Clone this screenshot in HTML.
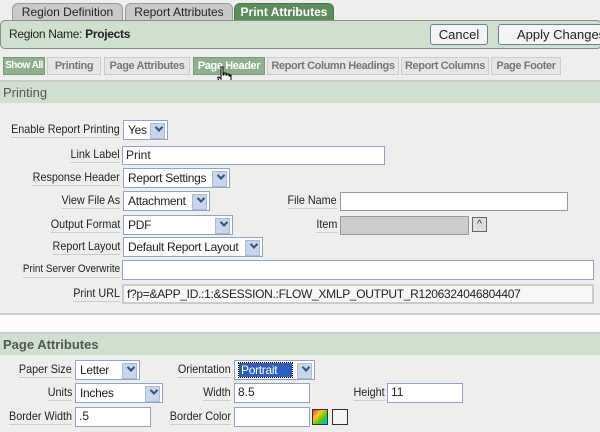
<!DOCTYPE html>
<html><head><style>
*{box-sizing:border-box;margin:0;padding:0}
body{width:600px;height:432px;overflow:hidden;background:#eeeeec;font-family:"Liberation Sans",sans-serif;font-size:12px;color:#222;position:relative}
.a{position:absolute;white-space:nowrap}
.tab{position:absolute;top:3px;height:17px;background:#c9c9c9;border:1px solid #999;border-bottom:none;border-radius:6px 6px 0 0;text-align:center;line-height:16px;font-size:12px;color:#222;white-space:nowrap}
.bar{position:absolute;left:0;top:20px;width:602px;height:29px;background:#cfe0cf;border:1px solid #8a8a8a;border-radius:5px}
.btn{position:absolute;top:24px;height:21px;background:#f4f4f4;border:1px solid #6b7fa0;border-radius:3px;text-align:center;line-height:19px;font-size:13px;white-space:nowrap}
.f{position:absolute;top:57px;height:18px;background:#e6e6e6;border:1px solid #ccc;line-height:16px;text-align:center;font-size:11px;font-weight:bold;color:#777;white-space:nowrap;overflow:hidden;letter-spacing:-0.4px}
.f.g{background:#8fb08f;color:#fff;border-color:#7a9a7a}
.hd{position:absolute;left:0;width:600px;height:21px;background:#cfe0cf;color:#555;font-size:13px;line-height:21px;padding-left:3px}
.l{position:absolute;white-space:nowrap;border-bottom:1px solid #ccc;line-height:15px;height:16px;transform:scaleX(0.9);transform-origin:right center}
.in{position:absolute;height:19px;background:#fff;border:1px solid #8fa4c4;line-height:17px;padding-left:3px;font-size:12px;white-space:nowrap;overflow:hidden}
.sel{position:absolute;height:20px;background:#fff;border:1px solid #8fa4c4;line-height:18px;padding-left:4px;white-space:nowrap;letter-spacing:-0.3px}
.sel:after{content:"";position:absolute;right:2px;top:2px;width:13px;height:14px;background:#c8d6ec;border:1px solid #a9bbd9}
.sel i{position:absolute;right:5px;top:5px;width:6px;height:6px;border-right:2px solid #3a4f7a;border-bottom:2px solid #3a4f7a;transform:rotate(45deg) translate(-1px,-1px);z-index:2}
</style></head><body>
<div class="tab" style="left:12px;width:111px">Region Definition</div>
<div class="tab" style="left:125px;width:108px">Report Attributes</div>
<div class="tab" style="left:234px;width:100px;background:#5d8d5d;color:#fff;font-weight:bold;border-color:#4a7a4a">Print Attributes</div>
<div class="bar"></div>
<div class="a" style="left:9px;top:27px;line-height:14px;font-size:12px;letter-spacing:-0.3px">Region Name: <b>Projects</b></div>
<div class="btn" style="left:430px;width:58px">Cancel</div>
<div class="btn" style="left:498px;width:110px;text-align:left;padding-left:18px">Apply Changes</div>
<div class="f g" style="left:3px;width:42px;font-size:10px;letter-spacing:-0.5px">Show All</div>
<div class="f" style="left:47px;width:54px">Printing</div>
<div class="f" style="left:104px;width:86px">Page Attributes</div>
<div class="f g" style="left:193px;width:72px">Page Header</div>
<div class="f" style="left:267px;width:132px">Report Column Headings</div>
<div class="f" style="left:401px;width:88px">Report Columns</div>
<div class="f" style="left:491px;width:70px">Page Footer</div>
<svg class="a" style="left:216px;top:66px" width="16" height="20" viewBox="0 0 16 20"><path d="M5 1h2v8h1V7h2v2h1V8h2v2h1V9h1v6l-2 4H6L2 13V11h1l2 2z" fill="#fff" stroke="#000" stroke-width="1"/></svg>
<div class="a" style="left:0;top:80px;width:600px;height:2px;background:#ccc"></div>
<div class="hd" style="top:82px">Printing</div>

<div class="l" style="right:480px;top:122px">Enable Report Printing</div>
<div class="sel" style="left:123px;top:120px;width:45px">Yes<i></i></div>
<div class="l" style="right:480px;top:147px">Link Label</div>
<div class="in" style="left:122px;top:146px;width:263px">Print</div>
<div class="l" style="right:480px;top:170px">Response Header</div>
<div class="sel" style="left:123px;top:168px;width:107px">Report Settings<i></i></div>
<div class="l" style="right:480px;top:193px">View File As</div>
<div class="sel" style="left:123px;top:191px;width:87px">Attachment<i></i></div>
<div class="l" style="right:263px;top:193px">File Name</div>
<div class="in" style="left:340px;top:192px;width:228px;border-color:#999"></div>
<div class="l" style="right:480px;top:217px">Output Format</div>
<div class="sel" style="left:123px;top:215px;width:110px">PDF<i></i></div>
<div class="l" style="right:263px;top:217px">Item</div>
<div class="in" style="left:340px;top:216px;width:129px;background:#ccc;border-color:#999"></div>
<div class="a" style="left:472px;top:217px;width:15px;height:15px;border:1px solid #666;background:#ddd;text-align:center;font-size:10px;line-height:14px">^</div>
<div class="l" style="right:480px;top:239px">Report Layout</div>
<div class="sel" style="left:123px;top:237px;width:140px">Default Report Layout<i></i></div>
<div class="l" style="right:480px;top:262px;font-size:11px">Print Server Overwrite</div>
<div class="in" style="left:122px;top:260px;width:472px;height:20px"></div>
<div class="l" style="right:480px;top:286px">Print URL</div>
<div class="in" style="left:122px;top:284px;width:472px;height:20px;background:#f7f7f5;border:2px solid #ccc;letter-spacing:-0.3px">f?p=&amp;APP_ID.:1:&amp;SESSION.:FLOW_XMLP_OUTPUT_R1206324046804407</div>

<div class="a" style="left:0;top:313px;width:600px;height:2px;background:#ccc"></div>
<div class="a" style="left:0;top:315px;width:600px;height:18px;background:#fcfcfc"></div>
<div class="a" style="left:0;top:332px;width:600px;height:2px;background:#ccc"></div>
<div class="hd" style="top:334px;height:21px;font-weight:bold">Page Attributes</div>

<div class="l" style="right:528px;top:362px">Paper Size</div>
<div class="sel" style="left:75px;top:360px;width:65px">Letter<i></i></div>
<div class="l" style="right:369px;top:362px">Orientation</div>
<div class="sel" style="left:234px;top:360px;width:81px"><span style="background:#2a5fc0;color:#fff;padding:0 15px 0 2px;outline:1px dotted #000">Portrait</span><i></i></div>
<div class="l" style="right:528px;top:385px">Units</div>
<div class="sel" style="left:75px;top:383px;width:88px">Inches<i></i></div>
<div class="l" style="right:369px;top:385px">Width</div>
<div class="in" style="left:234px;top:383px;width:76px;height:20px">8.5</div>
<div class="l" style="right:215px;top:385px">Height</div>
<div class="in" style="left:387px;top:383px;width:76px;height:20px">11</div>
<div class="l" style="right:528px;top:409px">Border Width</div>
<div class="in" style="left:75px;top:407px;width:76px;height:20px">.5</div>
<div class="l" style="right:369px;top:409px">Border Color</div>
<div class="in" style="left:234px;top:407px;width:76px;height:20px"></div>
<div class="a" style="left:312px;top:409px;width:16px;height:16px;border:1px solid #333;background:linear-gradient(135deg,#e33,#fc0,#3c3,#39f)"></div>
<div class="a" style="left:332px;top:409px;width:16px;height:16px;border:1px solid #333;background:#f4f4f4"></div>
</body></html>
